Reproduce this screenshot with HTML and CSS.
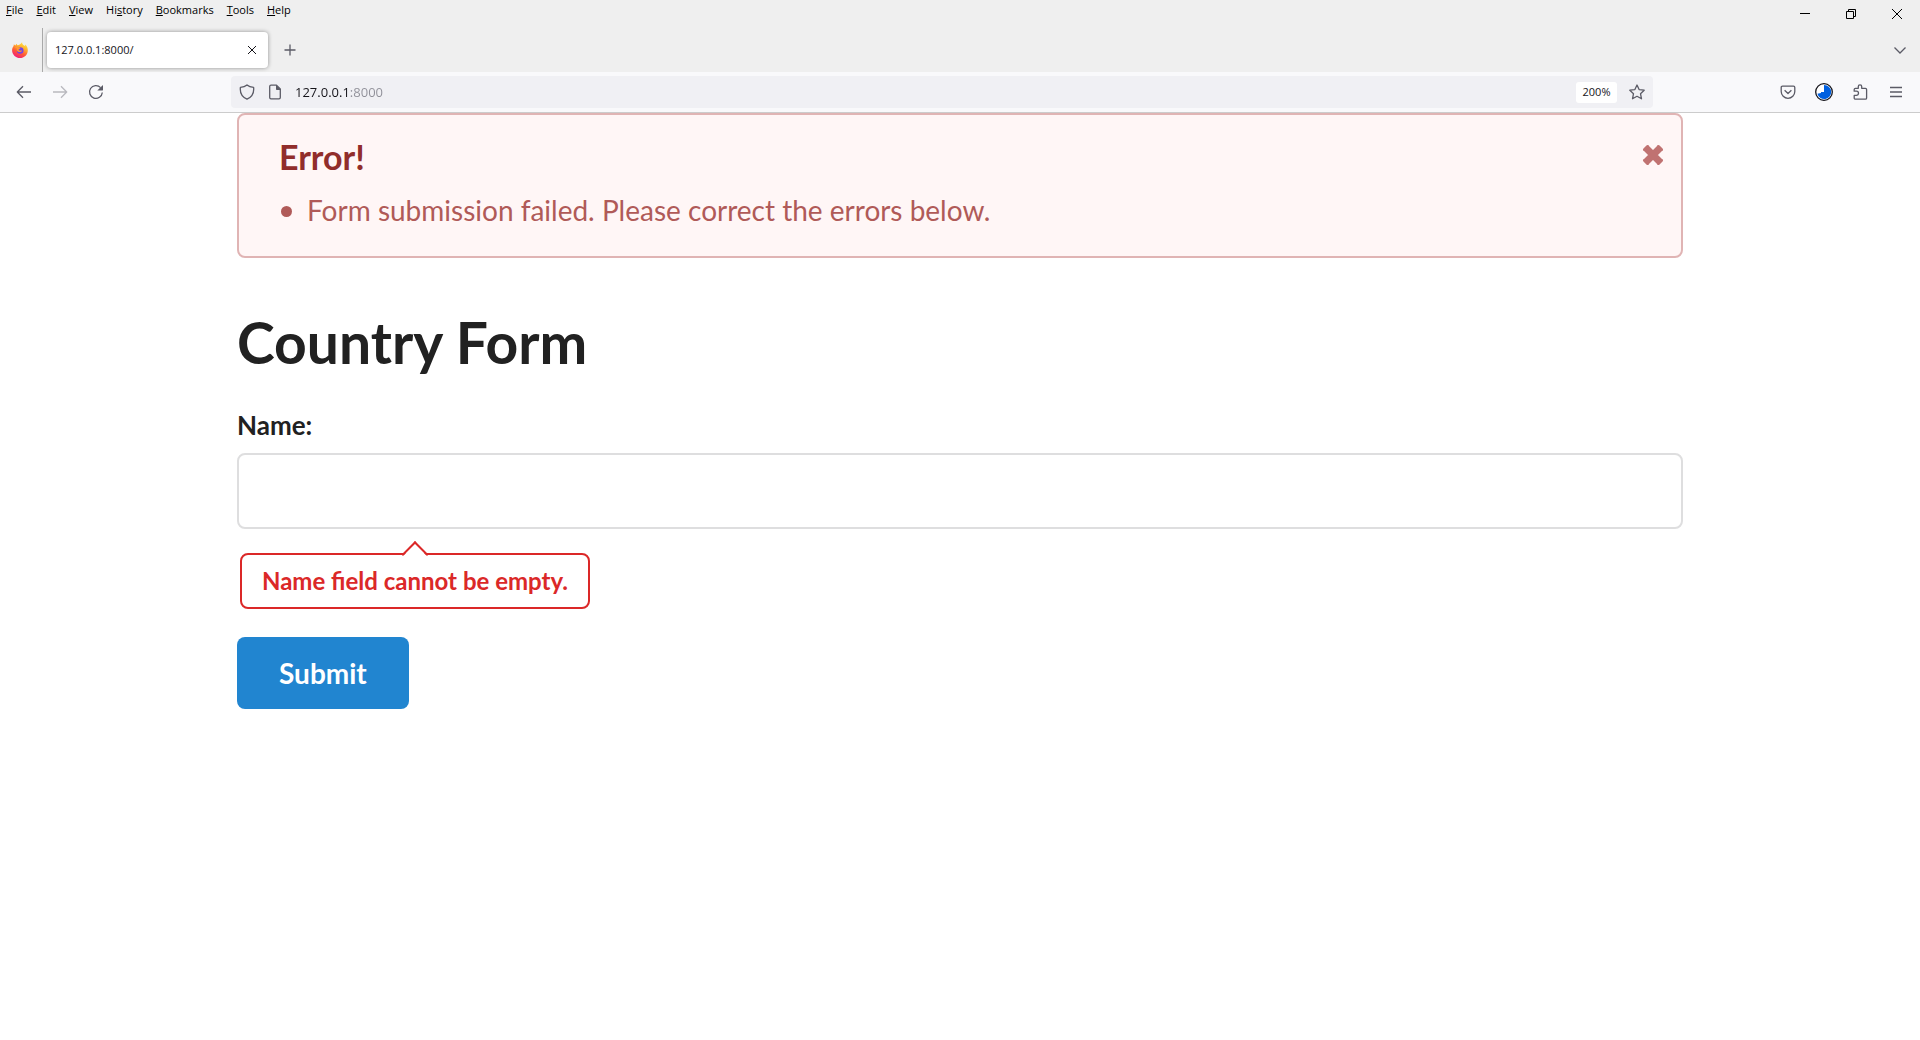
FILE: index.html
```
<!DOCTYPE html>
<html lang="en">
<head>
  <meta charset="utf-8">
  <title>127.0.0.1:8000/</title>
  <link rel="stylesheet" href="styles.css">
</head>
<body>
  <header class="browser">
    <div class="menubar">
      <nav class="menus" aria-label="Menu bar">
        <button type="button"><u>F</u>ile</button>
        <button type="button"><u>E</u>dit</button>
        <button type="button"><u>V</u>iew</button>
        <button type="button">Hi<u>s</u>tory</button>
        <button type="button"><u>B</u>ookmarks</button>
        <button type="button"><u>T</u>ools</button>
        <button type="button"><u>H</u>elp</button>
      </nav>
      <div class="window-controls">
        <button type="button" aria-label="Minimize"><svg width="10" height="10" viewBox="0 0 10 10"><path d="M0 4.5h10"/></svg></button>
        <button type="button" aria-label="Restore"><svg width="10" height="10" viewBox="0 0 10 10"><path d="M.5 2.5h7v7h-7zM2.5 2.500v-2h7v7h-2"/></svg></button>
        <button type="button" aria-label="Close"><svg width="10" height="10" viewBox="0 0 10 10"><path d="M0 0l10 10M10 0L0 10"/></svg></button>
      </div>
    </div>

    <div class="tabstrip">
      <button type="button" class="firefox" aria-label="Firefox View">
        <svg width="16" height="16" viewBox="0 0 16 16">
          <defs>
            <linearGradient id="flame" x1="0.8" y1="0" x2="0.3" y2="1">
              <stop offset="0" stop-color="#fff04a"/><stop offset=".35" stop-color="#ffb02e"/>
              <stop offset=".65" stop-color="#ff5a36"/><stop offset="1" stop-color="#f0197e"/>
            </linearGradient>
          </defs>
          <path fill="url(#flame)" d="M10.300 0c-.6 1 .1 2 1 2.900L13 4l.3-1.600C15 4 16 6.300 15.800 8.700 15.500 12.900 12.200 16 8 16S.3 12.800.1 8.700C0 6.800.7 5 1.600 3.900L1.900 2.300 3.300 3.500 4.600 1.800 5.400 3.300C7 3.300 8.400 2.200 10.300 0z"/>
          <circle cx="8.200" cy="8.500" r="3.300" fill="#7542e5"/>
          <path fill="#ff9a2c" d="M2.600 5.300c1.400-.8 2.800-.8 3.700-.1.900.1 1.900.2 2.200.8-.2.700-1.500 1-1.900 1.600 0 .7.500 1 1.200 1.100 1 .1 1.500-.5 2.300 0-.6 1.300-2.600 1.900-4.200.9C4.700 9 4.500 7.400 5 6.400z"/>
        </svg>
      </button>
      <div class="tabs">
        <div class="tab">
          <span class="tab-title">127.0.0.1:8000/</span>
          <button type="button" aria-label="Close tab"><svg width="8" height="8" viewBox="0 0 8 8"><path d="M0 0l8 8M8 0L0 8"/></svg></button>
        </div>
        <button type="button" class="new-tab" aria-label="New tab"><svg width="12" height="12" viewBox="0 0 12 12"><path d="M6 .5v11M.5 6h11"/></svg></button>
      </div>
      <button type="button" class="all-tabs" aria-label="List all tabs"><svg width="12" height="7" viewBox="0 0 12 7"><path d="M.5.500L6 6 11.500.500"/></svg></button>
    </div>

    <div class="toolbar">
      <div class="tools">
        <button type="button" aria-label="Back"><svg width="16" height="16" viewBox="0 0 16 16"><path d="M15 8H1.500M7 2.200L1.300 8 7 13.800"/></svg></button>
        <button type="button" aria-label="Forward" disabled><svg width="16" height="16" viewBox="0 0 16 16"><path d="M1 8h13.500M9 2.200L14.700 8 9 13.800"/></svg></button>
        <button type="button" aria-label="Reload"><svg width="16" height="16" viewBox="0 0 16 16"><path d="M14.300 8.500A6.400 6.400 0 1 1 12.600 3.600"/><path class="solid" d="M15 .9v5.200c0 .3-.2.500-.5.500H9.300z"/></svg></button>
      </div>
      <div class="urlbar">
        <svg width="16" height="16" viewBox="0 0 16 16"><path d="M8 .9C6.600 2.200 4 3.200 1.400 3.300.8 8.300 3.200 13 8 15.200 12.800 13 15.200 8.300 14.600 3.300 12 3.200 9.400 2.200 8 .9z"/></svg>
        <svg width="16" height="16" viewBox="0 0 16 16"><path d="M9.500 1.200H4C3.200 1.200 2.700 1.700 2.700 2.500v11c0 .8.500 1.300 1.300 1.300h8c.8 0 1.300-.5 1.300-1.300V5z"/><path class="solid" d="M9 1l5 5H9.700C9.300 6 9 5.700 9 5.300z"/></svg>
        <input type="text" class="url" aria-label="Address" value="127.0.0.1:8000" spellcheck="false">
        <button type="button" class="zoom">200%</button>
        <button type="button" class="star" aria-label="Bookmark this page"><svg width="16" height="16" viewBox="0 0 16 16"><path d="M8 1l2.100 4.600 5.100.6-3.700 3.500 1 5.100L8 12.300l-4.500 2.500 1-5.100L.8 6.200l5.100-.6z"/></svg></button>
      </div>
      <div class="tools tools-end">
        <button type="button" aria-label="Save to Pocket"><svg width="16" height="16" viewBox="0 0 16 16"><path d="M2.500 2.200h11c.8 0 1.300.5 1.300 1.300V7.500a6.800 6.800 0 0 1-13.600 0v-4c0-.8.500-1.300 1.300-1.300zM4.600 6.300L8 9.500l3.400-3.200"/></svg></button>
        <button type="button" aria-label="Extension"><svg width="18" height="18" viewBox="0 0 18 18"><circle cx="9" cy="9" r="8.300" fill="#fff" stroke="#15141a"/><path fill="#0060df" stroke="none" d="M9 2a7 7 0 1 1-6.600 8.800L6 10V9h3z"/></svg></button>
        <button type="button" aria-label="Extensions"><svg width="16" height="16" viewBox="0 0 16 16"><path d="M2.200 7V5.500c0-.7.500-1.200 1.200-1.200H6.300V2.500a1.700 1.700 0 0 1 3.400 0v1.800h3.700c.7 0 1.200.5 1.200 1.200v8.500c0 .7-.5 1.200-1.200 1.200H3.400c-.7 0-1.200-.5-1.200-1.200v-2.600h2.200a2.100 2.100 0 0 0 0-4.200H2.200z"/></svg></button>
        <button type="button" aria-label="Open application menu"><svg width="14" height="16" viewBox="0 0 14 16"><path d="M1 3.500h12M1 8h12M1 12.500h12"/></svg></button>
      </div>
    </div>
  </header>

  <main class="page">
    <section class="message" role="alert">
      <div>
        <h2>Error!</h2>
        <ul>
          <li>Form submission failed. Please correct the errors below.</li>
        </ul>
      </div>
      <button type="button" class="dismiss" aria-label="Dismiss"><svg width="22" height="22" viewBox="0 0 22 22"><path d="M3.500 3.500l15 15M18.500 3.500l-15 15"/><path class="corners" d="M2.500 5.500l3-3M16.500 2.500l3 3M19.500 16.500l-3 3M5.500 19.500l-3-3"/></svg></button>
    </section>

    <h1>Country Form</h1>
    <form class="form">
      <label for="name">Name:</label>
      <input type="text" id="name" name="name" aria-describedby="name-error">
      <div class="prompt" id="name-error">Name field cannot be empty.</div>
      <button type="submit" class="submit">Submit</button>
    </form>
  </main>
</body>
</html>
```

FILE: styles.css
```
* {
  box-sizing: border-box;
}

body {
  margin: 0;
  background: #fff;
  color: #212121;
  font-family: Lato, "Liberation Sans", sans-serif;
  font-size: 28px;
  line-height: 40px;
}

button,
input {
  margin: 0;
  padding: 0;
  border: 0;
  background: none;
  color: inherit;
  font: inherit;
}

svg {
  display: block;
  flex: none;
  fill: none;
  stroke: currentColor;
}

/* Browser window */

.browser {
  border-bottom: 1px solid #ccc;
  background: #efefef;
  color: #000;
  font: 11px/16px "Open Sans", "Noto Sans", sans-serif;
}

.browser button {
  display: flex;
  align-items: center;
  justify-content: center;
}

.menubar {
  display: flex;
  justify-content: space-between;
  height: 28px;
}

.menus {
  display: flex;
  align-items: flex-start;
  gap: 13px;
  padding: 2px 6px;
}

.menus button {
  display: block;
}

.window-controls {
  display: flex;
}

.window-controls button {
  width: 46px;
}

.tabstrip {
  display: flex;
  height: 44px;
  color: #5b5b66;
}

.firefox {
  width: 43px;
  padding-right: 3px;
  border-right: 1px solid #aaa;
}

.firefox svg {
  stroke: none;
}

.tabs {
  display: flex;
  flex: 1;
  gap: 4px;
  padding: 4px;
}

.tab {
  display: flex;
  align-items: center;
  justify-content: space-between;
  width: 221px;
  padding: 0 8px;
  border-radius: 4px;
  background: #fff;
  box-shadow: 0 0 4px rgba(0, 0, 0, 0.4);
  color: #15141a;
}

.tab button {
  width: 16px;
  height: 16px;
}

.new-tab {
  width: 36px;
}

.new-tab svg,
.all-tabs svg {
  stroke-width: 1.3;
}

.all-tabs {
  width: 40px;
}

.toolbar {
  display: grid;
  grid-template-columns: 231px 1fr 267px;
  align-items: center;
  height: 40px;
  background: #f9f9fb;
  color: #5b5b66;
}

.tools {
  display: flex;
  padding: 0 6px;
}

.tools-end {
  justify-content: flex-end;
}

.tools button {
  width: 36px;
  height: 32px;
}

.tools button:disabled {
  color: #b9b9bf;
}

.toolbar svg {
  stroke-width: 1.3;
  stroke-linejoin: round;
}

.toolbar .solid {
  fill: currentColor;
  stroke: none;
}

.urlbar {
  display: flex;
  align-items: center;
  gap: 12px;
  height: 32px;
  padding: 0 8px;
  border-radius: 4px;
  background: #f0f0f4;
}

/* The host is dark and the port is dimmed */
.url {
  flex: 1;
  min-width: 0;
  height: 24px;
  background: linear-gradient(to right, #15141a 55px, #8f8f98 55px);
  background-clip: text;
  color: transparent;
  font-size: 13px;
}

.zoom {
  width: 41px;
  height: 21px;
  border-radius: 3px;
  background: #fff;
  color: #15141a;
}

/* Web page */

.page {
  max-width: 1446px;
  margin: 0 auto;
}

.message {
  display: flex;
  align-items: flex-start;
  justify-content: space-between;
  padding: 22px 17px 26px 40px;
  border: 2px solid #e0b4b4;
  border-radius: 8px;
  background: #fff6f6;
  color: #b05a58;
}

.message h2 {
  margin: 0 0 13px;
  color: #912d2b;
  font-size: 34px;
  line-height: 40px;
}

.message ul {
  margin: 0;
  padding: 0 0 0 28px;
  list-style: none;
}

.message li {
  position: relative;
}

.message li::before {
  content: "";
  position: absolute;
  top: 16px;
  left: -26px;
  width: 11px;
  height: 11px;
  border-radius: 50%;
  background: currentColor;
}

.dismiss {
  padding-top: 7px;
  color: #c07271;
}

.dismiss svg {
  stroke-width: 7;
}

.dismiss .corners {
  stroke-width: 3;
  stroke-linecap: round;
}

h1 {
  margin: 48px 0 29px;
  font-size: 57px;
  line-height: 72px;
}

.form {
  display: flex;
  flex-direction: column;
  align-items: flex-start;
}

.form label {
  margin-bottom: 10px;
  font-size: 26px;
  font-weight: 700;
  line-height: 36px;
}

.form input {
  width: 100%;
  height: 76px;
  padding: 0 26px;
  border: 2px solid #dededf;
  border-radius: 8px;
  background: #fff;
}

.prompt {
  position: relative;
  margin: 24px 3px 28px;
  padding: 12px 20px;
  border: 2px solid #db2828;
  border-radius: 8px;
  color: #db2828;
  font-size: 24px;
  font-weight: 700;
  line-height: 28px;
}

/* Arrow that points up at the field */
.prompt::before {
  content: "";
  position: absolute;
  top: -10px;
  left: 50%;
  width: 17px;
  height: 17px;
  border: solid #db2828;
  border-width: 2px 0 0 2px;
  background: linear-gradient(135deg, #fff 50%, transparent 50%);
  transform: translateX(-50%) rotate(45deg);
}

.submit {
  height: 72px;
  padding: 0 42px;
  border-radius: 8px;
  background: #2185d0;
  color: #fff;
  font-weight: 700;
}
```
